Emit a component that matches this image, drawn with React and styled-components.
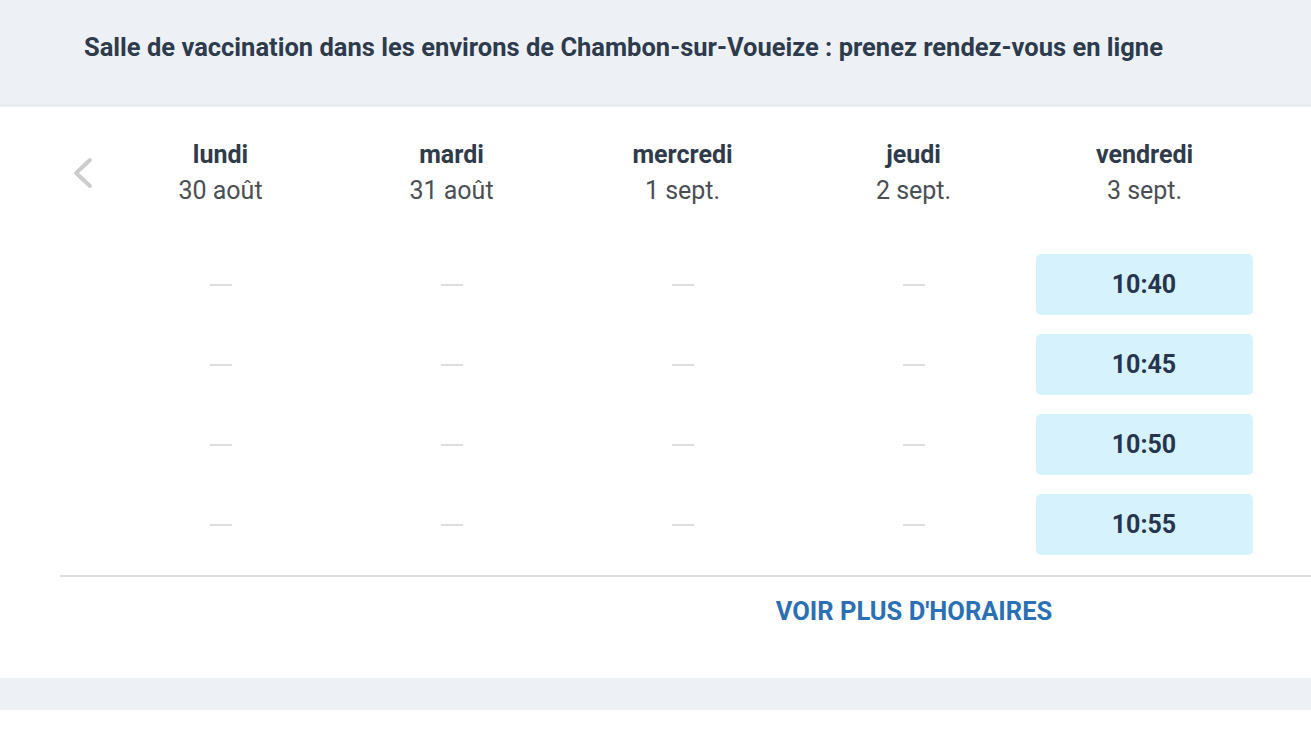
import React from "react";
import styled, { createGlobalStyle } from "styled-components";

const GlobalStyle = createGlobalStyle`
  body {
    margin: 0;
    background: #fff;
    font-family: Roboto, "Liberation Sans", Arial, sans-serif;
  }
`;

const Header = styled.div`
  height: 107px;
  background: #edf1f5;
  border-bottom: 3px solid #e9edf1;
  display: flex;
  align-items: center;
  padding: 0 0 10px 84px;
  box-sizing: border-box;
`;

const Title = styled.h1`
  margin: 0;
  font-size: 25.5px;
  font-weight: 700;
  color: #2d3b4d;
`;

const Body = styled.div`
  padding: 30px 0 0 60px;
`;

const Calendar = styled.div`
  display: flex;
`;

const Nav = styled.div`
  width: 45px;
  display: flex;
  justify-content: flex-start;
  padding: 20px 0 0 11px;
  box-sizing: border-box;
`;

const Grid = styled.div`
  display: grid;
  grid-template-columns: repeat(5, 231px);
  row-gap: 19px;
`;

const DayHead = styled.div`
  text-align: center;
  padding-bottom: 26px;
`;

const DayName = styled.div`
  font-size: 25px;
  font-weight: 700;
  color: #2f3b4b;
  line-height: 36px;
`;

const DayDate = styled.div`
  font-size: 25px;
  font-weight: 400;
  color: #4a4f55;
  line-height: 36px;
`;

const Cell = styled.div`
  height: 61px;
  display: flex;
  align-items: center;
  justify-content: center;
`;

const Dash = styled.span`
  width: 22px;
  height: 2px;
  background: #dedede;
  margin-top: 1px;
`;

const Slot = styled.button`
  width: 217px;
  height: 61px;
  border: none;
  border-radius: 5px;
  background: #d5f2fd;
  font-family: inherit;
  font-size: 25px;
  font-weight: 700;
  color: #26354d;
  cursor: pointer;
  margin-left: -1px;
`;

const Divider = styled.div`
  margin-top: 20px;
  height: 2px;
  background: #dcdcdc;
`;

const Footer = styled.div`
  height: 101px;
  display: flex;
  justify-content: center;
  padding: 20px 0 0 457px;
  box-sizing: border-box;
`;

const MoreLink = styled.a`
  font-size: 25.5px;
  font-weight: 700;
  color: #2b70b4;
  text-transform: uppercase;
  cursor: pointer;
  line-height: 28px;
`;

const Band = styled.div`
  height: 32px;
  background: #edf1f5;
`;

const days = [
  { name: "lundi", date: "30 août" },
  { name: "mardi", date: "31 août" },
  { name: "mercredi", date: "1 sept." },
  { name: "jeudi", date: "2 sept." },
  { name: "vendredi", date: "3 sept." },
];

const times = ["10:40", "10:45", "10:50", "10:55"];

const Chevron = () => (
  <svg width="24" height="32" viewBox="0 0 24 32">
    <path
      d="M19 3 L5 16 L19 29"
      fill="none"
      stroke="#cccccc"
      strokeWidth="4"
      strokeLinecap="round"
      strokeLinejoin="round"
    />
  </svg>
);

export default function App() {
  return (
    <>
      <GlobalStyle />
      <Header>
        <Title>
          Salle de vaccination dans les environs de Chambon-sur-Voueize : prenez
          rendez-vous en ligne
        </Title>
      </Header>
      <Body>
        <Calendar>
          <Nav>
            <Chevron />
          </Nav>
          <Grid>
            {days.map((d) => (
              <DayHead key={d.name}>
                <DayName>{d.name}</DayName>
                <DayDate>{d.date}</DayDate>
              </DayHead>
            ))}
            {times.map((t) =>
              days.map((d, i) => (
                <Cell key={t + d.name}>
                  {i === 4 ? <Slot>{t}</Slot> : <Dash />}
                </Cell>
              ))
            )}
          </Grid>
        </Calendar>
        <Divider />
        <Footer>
          <MoreLink>Voir plus d'horaires</MoreLink>
        </Footer>
      </Body>
      <Band />
    </>
  );
}
